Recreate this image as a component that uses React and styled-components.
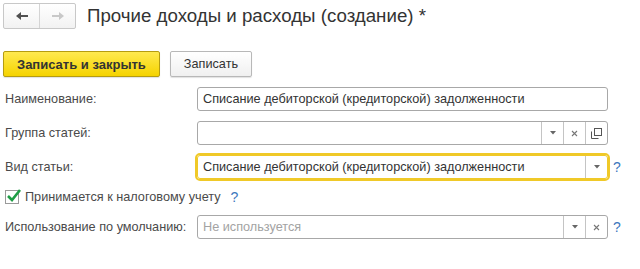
import React from 'react'
import styled, { createGlobalStyle } from 'styled-components'

const GlobalStyle = createGlobalStyle`
  html, body { margin: 0; padding: 0; background: #fff; }
  body { font-family: Arial, "Liberation Sans", sans-serif; font-size: 12.7px; color: #333; }
`

const Page = styled.div`
  width: 640px;
  height: 269px;
  padding: 3px 3px 0 3px;
  box-sizing: border-box;
  overflow: hidden;
`

const Header = styled.div`
  display: flex;
  align-items: center;
  height: 26px;
`

const NavGroup = styled.div`
  display: flex;
  height: 26px;
  border: 1px solid #c8c8c8;
  border-radius: 2px;
  box-sizing: border-box;
  background: linear-gradient(#ffffff, #f2f2f2);
`

const NavButton = styled.div`
  width: 35px;
  display: flex;
  align-items: center;
  justify-content: center;
  & + & { border-left: 1px solid #d4d4d4; }
`

const Title = styled.h1`
  margin: 0 0 0 11px;
  font-size: 18.7px;
  font-weight: normal;
  color: #333;
  white-space: nowrap;
`

const Toolbar = styled.div`
  display: flex;
  gap: 10px;
  margin-top: 22px;
`

const Button = styled.div`
  height: 26px;
  box-sizing: border-box;
  padding: 0 13px;
  display: flex;
  align-items: center;
  border-radius: 2px;
  font-size: ${p => (p.$primary ? '13px' : '12.7px')};
  font-weight: ${p => (p.$primary ? 'bold' : 'normal')};
  color: #333;
  border: 1px solid ${p => (p.$primary ? '#b59c10' : '#b8b8b8')};
  background: ${p => (p.$primary
    ? 'linear-gradient(#ffe94f, #f5d300)'
    : 'linear-gradient(#ffffff, #f0f0f0)')};
  box-shadow: 0 1px 1px rgba(0, 0, 0, 0.12);
`

const Form = styled.div`
  display: grid;
  grid-template-columns: 194px 411px 1fr;
  row-gap: 10px;
  margin-top: 10px;
  align-items: center;
`

const Label = styled.div`
  padding-left: 2px;
  color: #4a4a4a;
  white-space: nowrap;
`

const Field = styled.div`
  display: flex;
  height: 24px;
  box-sizing: border-box;
  border: 1px solid ${p => (p.$focused ? '#f0c928' : '#a8a8a8')};
  border-radius: 3px;
  background: #fff;
  outline: ${p => (p.$focused ? '2px solid #f0c928' : 'none')};
`

const FieldText = styled.div`
  flex: 1;
  padding-left: 5px;
  display: flex;
  align-items: center;
  white-space: nowrap;
  overflow: hidden;
  color: ${p => (p.$placeholder ? '#a3a3a3' : '#333')};
`

const FieldButton = styled.div`
  width: 21px;
  border-left: 1px solid #c4c4c4;
  display: flex;
  align-items: center;
  justify-content: center;
`

const Help = styled.div`
  padding-left: 5px;
  color: #3d78bd;
  font-size: 14px;
`

const CheckRow = styled.div`
  grid-column: 1 / -1;
  display: flex;
  align-items: center;
  height: 16px;
  padding-left: 2px;
`

const CheckBox = styled.div`
  position: relative;
  width: 14px;
  height: 14px;
  box-sizing: border-box;
  border: 1px solid #9a9a9a;
  background: #fff;
  margin-right: 6px;
  svg { position: absolute; left: 0; top: -3px; }
`

const CheckLabel = styled.span`
  color: #4a4a4a;
`

const InlineHelp = styled.span`
  color: #3d78bd;
  font-size: 14px;
  margin-left: 10px;
`

const Arrow = ({ dir, color }) => (
  <svg width="14" height="10" viewBox="0 0 14 10">
    {dir === 'left'
      ? <path d="M1 5 L6 1 L6 4 L13 4 L13 6 L6 6 L6 9 Z" fill={color} />
      : <path d="M13 5 L8 1 L8 4 L1 4 L1 6 L8 6 L8 9 Z" fill={color} />}
  </svg>
)

const DropIcon = () => (
  <svg width="6" height="4" viewBox="0 0 6 4"><path d="M0 0 L6 0 L3 3.5 Z" fill="#666" /></svg>
)

const ClearIcon = () => (
  <svg width="7" height="7" viewBox="0 0 7 7"><path d="M1 1 L6 6 M6 1 L1 6" stroke="#777" strokeWidth="1.1" /></svg>
)

const OpenIcon = () => (
  <svg width="11" height="11" viewBox="0 0 11 11">
    <path d="M0.5 3.5 V10.5 H7.5" stroke="#555" fill="none" />
    <rect x="3.5" y="0.5" width="7" height="7" stroke="#555" fill="none" />
  </svg>
)

const CheckMark = () => (
  <svg width="16" height="15" viewBox="0 0 16 15">
    <path d="M2 8 L6 12 L14 2" stroke="#1f9d45" strokeWidth="2.6" fill="none" />
  </svg>
)

export default function App() {
  return (
    <Page>
      <GlobalStyle />
      <Header>
        <NavGroup>
          <NavButton><Arrow dir="left" color="#505050" /></NavButton>
          <NavButton><Arrow dir="right" color="#c8c8c8" /></NavButton>
        </NavGroup>
        <Title>Прочие доходы и расходы (создание) *</Title>
      </Header>
      <Toolbar>
        <Button $primary>Записать и закрыть</Button>
        <Button>Записать</Button>
      </Toolbar>
      <Form>
        <Label>Наименование:</Label>
        <Field>
          <FieldText>Списание дебиторской (кредиторской) задолженности</FieldText>
        </Field>
        <div />

        <Label>Группа статей:</Label>
        <Field>
          <FieldText />
          <FieldButton><DropIcon /></FieldButton>
          <FieldButton><ClearIcon /></FieldButton>
          <FieldButton><OpenIcon /></FieldButton>
        </Field>
        <div />

        <Label>Вид статьи:</Label>
        <Field $focused>
          <FieldText>Списание дебиторской (кредиторской) задолженности</FieldText>
          <FieldButton><DropIcon /></FieldButton>
        </Field>
        <Help>?</Help>

        <CheckRow>
          <CheckBox><CheckMark /></CheckBox>
          <CheckLabel>Принимается к налоговому учету</CheckLabel>
          <InlineHelp>?</InlineHelp>
        </CheckRow>

        <Label>Использование по умолчанию:</Label>
        <Field>
          <FieldText $placeholder>Не используется</FieldText>
          <FieldButton><DropIcon /></FieldButton>
          <FieldButton><ClearIcon /></FieldButton>
        </Field>
        <Help>?</Help>
      </Form>
    </Page>
  )
}
